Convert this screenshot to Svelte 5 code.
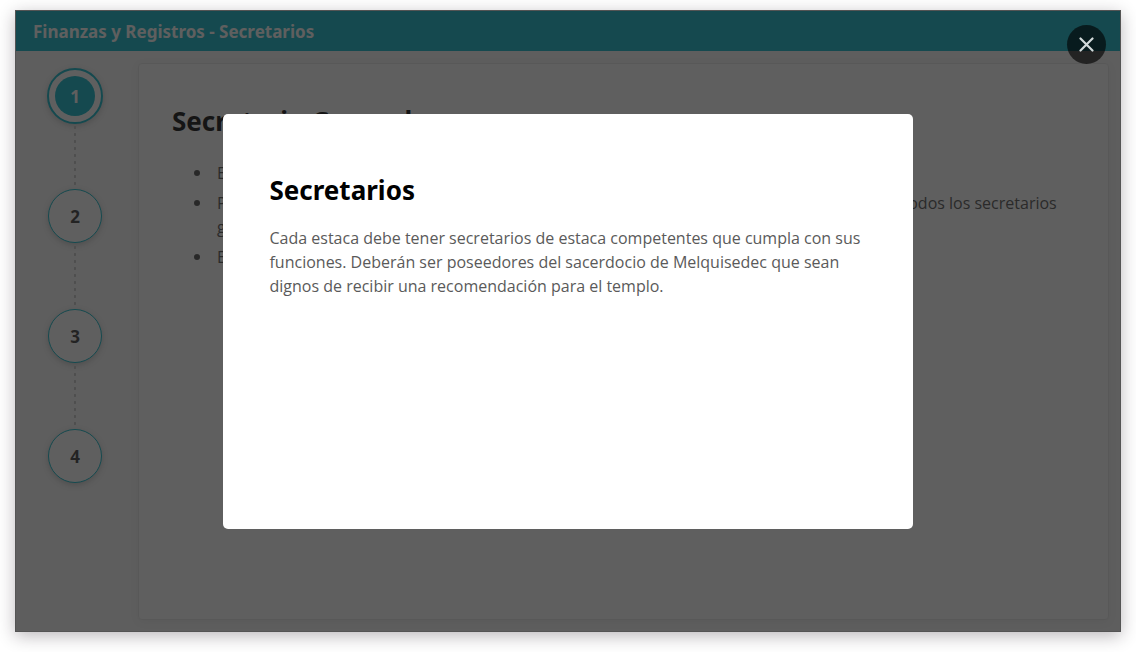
<script>
  const steps = [1, 2, 3, 4];
  let current = $state(1);
  let open = $state(true);
</script>

<div class="page">
  <main class="frame">
    <header class="bar">
      <h1>Finanzas y Registros - Secretarios</h1>
    </header>

    <div class="body">
      <nav class="steps" aria-label="Pasos">
        {#each steps as step}
          <div class="step">
            <button
              type="button"
              class="dot"
              class:active={step === current}
              aria-current={step === current ? 'step' : undefined}
              onclick={() => (current = step)}
            ><span>{step}</span></button>
          </div>
        {/each}
      </nav>

      <article class="card">
        <h2>Secretario General</h2>
        <ul>
          <li>Es llamado por el presidente de estaca.</li>
          <li>
            Por asignación del presidente de estaca, dirige sus reuniones y coordina el trabajo diario de todos los
            secretarios generales.
          </li>
          <li>Es poseedor del sacerdocio de Melquisedec.</li>
        </ul>
      </article>
    </div>

    {#if open}
      <div class="overlay">
        <div class="dialog" role="dialog" aria-modal="true" aria-labelledby="dialog-title">
          <h2 id="dialog-title">Secretarios</h2>
          <p>
            Cada estaca debe tener secretarios de estaca competentes que cumpla con sus funciones.
            Deberán ser poseedores del sacerdocio de Melquisedec que sean dignos de recibir una
            recomendación para el templo.
          </p>
        </div>
        <button type="button" class="close" aria-label="Cerrar" onclick={() => (open = false)}>
          <svg viewBox="0 0 15 15" width="15" height="15" aria-hidden="true">
            <path d="M1.5 1.5 L13.5 13.5 M13.5 1.5 L1.5 13.5" />
          </svg>
        </button>
      </div>
    {/if}
  </main>
</div>

<style>
  :global(body) {
    margin: 0;
    background: #fff;
  }

  .page {
    box-sizing: border-box;
    min-height: 100vh;
    padding: 10px 15px 20px;
    display: flex;
    font-family: 'Open Sans', 'Noto Sans', sans-serif;
    font-size: 16px;
    line-height: 24px;
    color: #5a5a5a;
  }

  .frame {
    position: relative;
    flex: 1;
    display: flex;
    flex-direction: column;
    border: 1px solid #d8d8d8;
    background: #fafafa;
    box-shadow: 0 4px 16px rgba(30, 20, 30, 0.3);
  }

  .bar {
    padding: 9px 17px 7px;
    background: #00b4c6;
    color: #fff;
  }

  h1,
  h2,
  p,
  ul {
    margin: 0;
  }

  h1 {
    font: 700 17px/24px 'Noto Sans', sans-serif;
  }

  h2 {
    font: 700 26px/36px 'Noto Sans', sans-serif;
    color: #000;
  }

  .body {
    flex: 1;
    display: flex;
    padding: 12px 11px 11px 12px;
  }

  .steps {
    flex: none;
    width: 94px;
    margin-right: 16px;
    padding-top: 5px;
    display: flex;
    flex-direction: column;
    align-items: center;
  }

  .step {
    height: 120px;
    display: flex;
    flex-direction: column;
    align-items: center;
  }

  .step:not(:last-child)::after {
    content: '';
    flex: 1;
    width: 2px;
    background: radial-gradient(circle, #c4c4c4 1px, transparent 2px) center top / 2px 7px repeat-y;
  }

  .dot {
    box-sizing: border-box;
    width: 54px;
    height: 54px;
    margin: 1px;
    padding: 0;
    display: grid;
    place-items: center;
    border: 1px solid #00b4c6;
    border-radius: 50%;
    background: #fff;
    box-shadow: 0 2px 6px rgba(0, 0, 0, 0.22);
    color: #333;
    font: 700 17px/24px 'Noto Sans', sans-serif;
    cursor: pointer;
  }

  .active {
    width: 56px;
    height: 56px;
    margin: 0;
    border-width: 2px;
  }

  .dot span {
    box-sizing: border-box;
    width: 40px;
    height: 40px;
    padding-top: 1px;
    border-radius: 50%;
    line-height: 40px;
  }

  .active span {
    background: #00b4c6;
    color: #fff;
  }

  .card {
    flex: 1;
    box-sizing: border-box;
    padding: 39px 33px;
    border: 1px solid #e8e8e8;
    border-radius: 4px;
    background: #fff;
    box-shadow: 0 2px 10px rgba(0, 0, 0, 0.06);
  }

  .card ul {
    margin-top: 22px;
    padding: 0;
    list-style: none;
  }

  .card li {
    display: flex;
    gap: 17px;
    margin-bottom: 6px;
    padding-left: 22px;
    color: #4a4a4a;
  }

  .card li::before {
    content: '';
    flex: none;
    width: 6px;
    height: 6px;
    margin-top: 9px;
    border-radius: 50%;
    background: #444;
  }

  .overlay {
    position: absolute;
    inset: -1px;
    display: flex;
    align-items: center;
    justify-content: center;
    background: rgba(30, 30, 30, 0.71);
  }

  .dialog {
    box-sizing: border-box;
    width: 62.3%;
    min-height: 415px;
    padding: 58px 46px;
    border-radius: 5px;
    background: #fff;
  }

  .dialog p {
    margin-top: 18px;
  }

  .close {
    position: absolute;
    top: 15px;
    right: 15px;
    width: 39px;
    height: 39px;
    padding: 0;
    display: grid;
    place-items: center;
    border: 0;
    border-radius: 50%;
    background: rgba(0, 0, 0, 0.62);
    cursor: pointer;
  }

  .close path {
    fill: none;
    stroke: #d3dadb;
    stroke-width: 2.2;
    stroke-linecap: round;
  }
</style>
